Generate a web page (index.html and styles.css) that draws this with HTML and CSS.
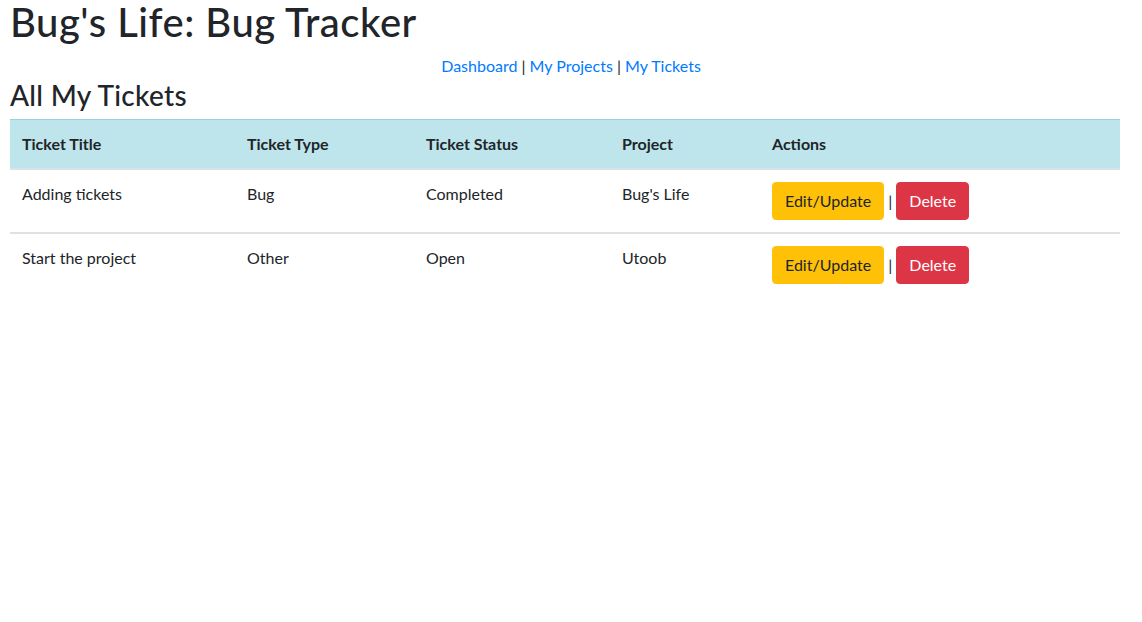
FILE: index.html
```html
<!DOCTYPE html>
<html lang="en">
<head>
<meta charset="utf-8">
<title>Bug's Life: Bug Tracker</title>
<link rel="stylesheet" href="styles.css">
</head>
<body>
<div class="page">
  <h1 class="title">Bug's Life: Bug Tracker</h1>
  <nav class="nav">
    <a href="#">Dashboard</a> | <a href="#">My Projects</a> | <a href="#">My Tickets</a>
  </nav>
  <h2 class="subtitle">All My Tickets</h2>
  <table class="tickets">
    <thead>
      <tr class="head-row">
        <th class="c-title">Ticket Title</th>
        <th class="c-type">Ticket Type</th>
        <th class="c-status">Ticket Status</th>
        <th class="c-project">Project</th>
        <th class="c-actions">Actions</th>
      </tr>
    </thead>
    <tbody>
      <tr>
        <td>Adding tickets</td>
        <td>Bug</td>
        <td>Completed</td>
        <td>Bug's Life</td>
        <td><button class="btn btn-warning">Edit/Update</button> | <button class="btn btn-danger">Delete</button></td>
      </tr>
    </tbody>
    <tbody>
      <tr>
        <td>Start the project</td>
        <td>Other</td>
        <td>Open</td>
        <td>Utoob</td>
        <td><button class="btn btn-warning">Edit/Update</button> | <button class="btn btn-danger">Delete</button></td>
      </tr>
    </tbody>
  </table>
</div>
</body>
</html>
```
FILE: styles.css
```css
html, body {
  margin: 0;
  padding: 0;
  background: #fff;
}
body {
  font-family: "Lato", "Open Sans", sans-serif;
  font-size: 16px;
  line-height: 1.5;
  color: #212529;
}
.page {
  padding: 0 10px;
}
.title {
  margin: 0 0 10px;
  font-size: 40px;
  font-weight: 500;
  line-height: 44px;
  letter-spacing: 0.5px;
}
.nav {
  text-align: center;
  line-height: 24px;
}
.nav a {
  color: #007bff;
  text-decoration: none;
}
.subtitle {
  margin: 0 0 7px;
  font-size: 28px;
  font-weight: 500;
  line-height: 34px;
  letter-spacing: 0.3px;
}
.tickets {
  width: 1110px;
  border-collapse: collapse;
  table-layout: fixed;
}
.tickets th,
.tickets td {
  padding: 12px;
  text-align: left;
  vertical-align: top;
}
.head-row th {
  background: #bee5eb;
  border-top: 1px solid #9fcfd7;
  border-bottom: 2px solid #d6e4e7;
  font-weight: 700;
}
.tickets tbody + tbody td {
  border-top: 2px solid #dee2e6;
}
.c-title { width: 201px; }
.c-type { width: 155px; }
.c-status { width: 172px; }
.c-project { width: 126px; }
.c-actions { width: auto; }
.btn {
  display: inline-block;
  font-family: inherit;
  font-size: 16px;
  line-height: 24px;
  padding: 6px 12px;
  border: 1px solid transparent;
  border-radius: 4px;
  cursor: pointer;
}
.btn-warning {
  background: #ffc107;
  border-color: #ffc107;
  color: #212529;
}
.btn-danger {
  background: #dc3545;
  border-color: #dc3545;
  color: #fff;
}
```
